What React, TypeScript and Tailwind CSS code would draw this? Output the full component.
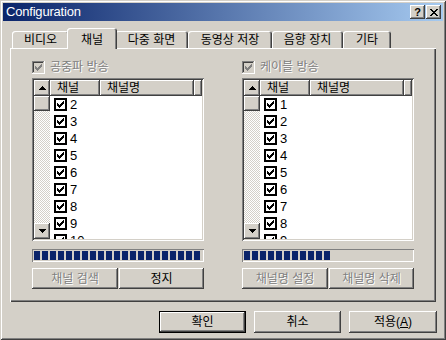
import React from "react";

const CHECK_ROWS: [number, number, number][] = [
  [0, 6, 1],
  [1, 5, 2],
  [2, 0, 1],
  [2, 4, 3],
  [3, 0, 2],
  [3, 3, 3],
  [4, 0, 5],
  [5, 1, 3],
  [6, 2, 1],
];

function CheckMark({ color, ox, oy }: { color: string; ox: number; oy: number }) {
  return (
    <>
      {CHECK_ROWS.map(([y, x, w], i) => (
        <rect key={i} x={ox + x} y={oy + y} width={w} height={1} fill={color} />
      ))}
    </>
  );
}

function ListCheck() {
  return (
    <svg width="13" height="13" viewBox="0 0 13 13" shapeRendering="crispEdges" className="shrink-0">
      <rect x="0" y="0" width="13" height="13" fill="#000" />
      <rect x="2" y="2" width="9" height="9" fill="#fff" />
      <CheckMark color="#000" ox={3} oy={3} />
    </svg>
  );
}

function DisabledCheck() {
  return (
    <svg width="13" height="13" viewBox="0 0 13 13" shapeRendering="crispEdges" className="shrink-0">
      <rect x="0" y="0" width="13" height="13" fill="#fff" />
      <rect x="0" y="0" width="12" height="12" fill="#808080" />
      <rect x="1" y="1" width="11" height="11" fill="#d4d0c8" />
      <rect x="1" y="1" width="10" height="10" fill="#404040" />
      <rect x="2" y="2" width="9" height="9" fill="#d4d0c8" />
      <CheckMark color="#808080" ox={3} oy={3} />
    </svg>
  );
}

function Arrow({ up }: { up: boolean }) {
  return (
    <svg width="7" height="4" viewBox="0 0 7 4" shapeRendering="crispEdges">
      {up ? (
        <>
          <rect x="3" y="0" width="1" height="1" fill="#000" />
          <rect x="2" y="1" width="3" height="1" fill="#000" />
          <rect x="1" y="2" width="5" height="1" fill="#000" />
          <rect x="0" y="3" width="7" height="1" fill="#000" />
        </>
      ) : (
        <>
          <rect x="0" y="0" width="7" height="1" fill="#000" />
          <rect x="1" y="1" width="5" height="1" fill="#000" />
          <rect x="2" y="2" width="3" height="1" fill="#000" />
          <rect x="3" y="3" width="1" height="1" fill="#000" />
        </>
      )}
    </svg>
  );
}

const raised =
  "bg-[#d4d0c8] shadow-[inset_-1px_-1px_#404040,inset_1px_1px_#ffffff,inset_-2px_-2px_#808080]";
const disabledText = "text-[#808080] [text-shadow:1px_1px_0_#ffffff]";

function ListBox({ items }: { items: number[] }) {
  return (
    <div className="w-[172px] h-[163px] p-[2px] bg-white shadow-[inset_1px_1px_#808080,inset_-1px_-1px_#ffffff,inset_2px_2px_#404040,inset_-2px_-2px_#d4d0c8]">
      <div className="flex h-full overflow-hidden">
        <div className="w-[16px] h-full flex flex-col bg-[repeating-conic-gradient(#ffffff_0%_25%,#d4d0c8_0%_50%)] bg-[length:2px_2px]">
          <div className={`h-[16px] flex items-center justify-center ${raised}`}>
            <Arrow up />
          </div>
          <div className={`h-[15px] ${raised}`} />
          <div className="flex-1" />
          <div className={`h-[16px] flex items-center justify-center ${raised}`}>
            <Arrow up={false} />
          </div>
        </div>
        <div className="flex-1 flex flex-col min-w-0">
          <div className="flex h-[16px] shrink-0 text-[12px] leading-[16px] text-black">
            <div className={`w-[50px] pl-[7px] ${raised}`}>채널</div>
            <div className={`w-[94px] pl-[7px] ${raised}`}>채널명</div>
            <div className={`flex-1 ${raised}`} />
          </div>
          <div className="flex flex-col">
            {items.map((n) => (
              <div key={n} className="h-[17px] shrink-0 flex items-center pl-[4px] gap-[3px] text-[13px] text-black">
                <ListCheck />
                <span className="leading-[17px]">{n}</span>
              </div>
            ))}
          </div>
        </div>
      </div>
    </div>
  );
}

function Progress({ blocks }: { blocks: number }) {
  return (
    <div className="w-[172px] h-[13px] p-[2px] flex shadow-[inset_1px_1px_#808080,inset_-1px_-1px_#ffffff]">
      {Array.from({ length: blocks }).map((_, i) => (
        <div key={i} className="w-[6px] h-full mr-[2px] bg-[#0a246a] shrink-0" />
      ))}
    </div>
  );
}

function SmallButton({ label, disabled, w }: { label: string; disabled?: boolean; w: string }) {
  return (
    <div
      className={`${w} h-[21px] flex items-center justify-center text-[12px] ${raised} ${
        disabled ? disabledText : "text-black"
      }`}
    >
      {label}
    </div>
  );
}

function Group({
  title,
  items,
  blocks,
  b1,
  b2,
  b2disabled,
}: {
  title: string;
  items: number[];
  blocks: number;
  b1: string;
  b2: string;
  b2disabled: boolean;
}) {
  return (
    <div className="w-[172px] flex flex-col">
      <div className="h-[13px] flex items-center gap-[5px]">
        <DisabledCheck />
        <span className={`text-[12px] leading-[13px] ${disabledText}`}>{title}</span>
      </div>
      <div className="mt-[4px]">
        <ListBox items={items} />
      </div>
      <div className="mt-[8px]">
        <Progress blocks={blocks} />
      </div>
      <div className="mt-[6px] flex gap-[1px]">
        <SmallButton label={b1} disabled w="w-[86px]" />
        <SmallButton label={b2} disabled={b2disabled} w="w-[85px]" />
      </div>
    </div>
  );
}

function Tab({ label, w, selected }: { label: string; w: string; selected?: boolean }) {
  if (selected) {
    return (
      <div
        className={`${w} h-[21px] -mb-[1px] -mx-[2px] relative z-10 bg-[#d4d0c8] rounded-t-[3px] flex items-start justify-center pt-[3px] text-[12px] text-black shadow-[inset_1px_1px_#ffffff,inset_-1px_0_#404040,inset_-2px_0_#808080]`}
      >
        {label}
      </div>
    );
  }
  return (
    <div
      className={`${w} h-[17px] bg-[#d4d0c8] rounded-t-[3px] flex items-center justify-center pt-[1px] text-[12px] text-black shadow-[inset_1px_1px_#ffffff,inset_-1px_0_#404040,inset_-2px_0_#808080]`}
    >
      {label}
    </div>
  );
}

function DlgButton({ children, isDefault, w }: { children: React.ReactNode; isDefault?: boolean; w: string }) {
  return (
    <div className={`${w} h-[22px] ${isDefault ? "border border-black" : ""}`}>
      <div className={`w-full h-full flex items-center justify-center text-[12px] text-black ${raised}`}>
        {children}
      </div>
    </div>
  );
}

export default function App() {
  return (
    <div className="w-[446px] h-[340px] bg-[#d4d0c8] p-[3px] flex flex-col font-['Liberation_Sans','Noto_Sans_CJK_KR',sans-serif] shadow-[inset_1px_1px_#d4d0c8,inset_-1px_-1px_#404040,inset_2px_2px_#ffffff,inset_-2px_-2px_#808080] overflow-hidden">
      <div className="h-[18px] flex items-center bg-[linear-gradient(to_right,#0a246a,#a6caf0)] pl-[3px] pr-[2px]">
        <span className="text-white text-[13px] leading-[18px] tracking-[-0.2px]">Configuration</span>
        <div className="ml-auto flex gap-[1px]">
          <div className={`w-[15px] h-[14px] flex items-center justify-center text-[11px] font-bold leading-none text-black ${raised}`}>
            ?
          </div>
          <div className={`w-[15px] h-[14px] flex items-center justify-center ${raised}`}>
            <svg width="8" height="7" viewBox="0 0 8 7" shapeRendering="crispEdges">
              <path d="M0 0h2v1h-2zM6 0h2v1h-2zM1 1h2v1h-2zM5 1h2v1h-2zM2 2h4v1h-4zM3 3h2v1h-2zM2 4h4v1h-4zM1 5h2v1h-2zM5 5h2v1h-2zM0 6h2v1h-2zM6 6h2v1h-2z" fill="#000" />
            </svg>
          </div>
        </div>
      </div>
      <div className="px-[7px] flex flex-col">
        <div className="mt-[7px] h-[20px] flex items-end pl-[2px] relative z-10">
          <Tab label="비디오" w="w-[57px]" />
          <Tab label="채널" w="w-[50px]" selected />
          <Tab label="다중 화면" w="w-[73px]" />
          <Tab label="동영상 저장" w="w-[84px]" />
          <Tab label="음향 장치" w="w-[71px]" />
          <Tab label="기타" w="w-[48px]" />
        </div>
        <div className="w-[426px] h-[254px] pl-[22px] pt-[13px] flex gap-[38px] shadow-[inset_1px_1px_#ffffff,inset_-1px_-1px_#404040,inset_-2px_-2px_#808080]">
          <Group
            title="공중파 방송"
            items={[2, 3, 4, 5, 6, 7, 8, 9, 10]}
            blocks={21}
            b1="채널 검색"
            b2="정지"
            b2disabled={false}
          />
          <Group
            title="케이블 방송"
            items={[1, 2, 3, 4, 5, 6, 7, 8, 9]}
            blocks={11}
            b1="채널명 설정"
            b2="채널명 삭제"
            b2disabled
          />
        </div>
        <div className="mt-[9px] flex justify-end gap-[8px] -mr-[1px]">
          <DlgButton isDefault w="w-[87px]">확인</DlgButton>
          <DlgButton w="w-[87px]">취소</DlgButton>
          <DlgButton w="w-[88px]">
            <span>
              적용(<span className="underline">A</span>)
            </span>
          </DlgButton>
        </div>
      </div>
    </div>
  );
}
